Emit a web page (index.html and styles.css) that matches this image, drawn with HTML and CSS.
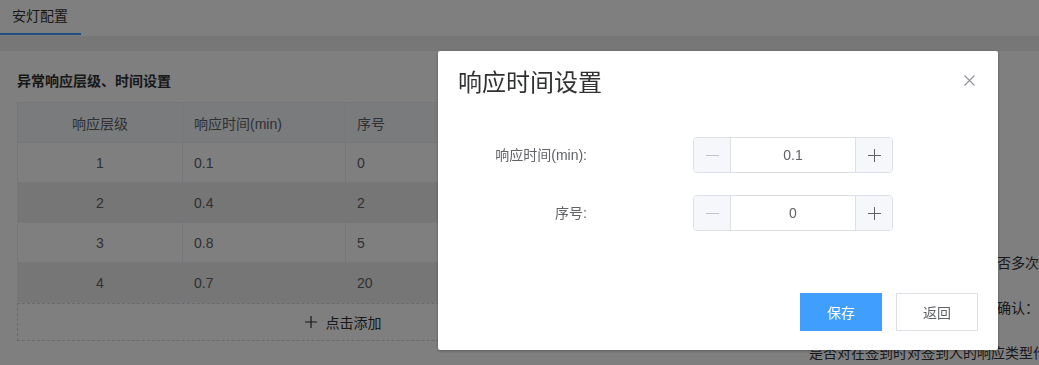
FILE: index.html
```html
<!DOCTYPE html>
<html lang="zh-CN">
<head>
  <meta charset="UTF-8" />
  <title>安灯配置</title>
  <link rel="stylesheet" href="styles.css">
</head>
<body>

  <!-- Tabs -->
  <div class="tabs">
    <div class="tab active">安灯配置</div>
  </div>

  <!-- Page content -->
  <div class="main">
    <div class="card">
      <div class="left-panel">
        <div class="section-title">异常响应层级、时间设置</div>
        <table class="level-table">
          <thead>
            <tr>
              <th class="center">响应层级</th>
              <th>响应时间(min)</th>
              <th>序号</th>
              <th class="center">操作</th>
            </tr>
          </thead>
          <tbody>
            <tr><td class="center">1</td><td>0.1</td><td>0</td><td class="center">编辑</td></tr>
            <tr class="striped"><td class="center">2</td><td>0.4</td><td>2</td><td class="center">编辑</td></tr>
            <tr><td class="center">3</td><td>0.8</td><td>5</td><td class="center">编辑</td></tr>
            <tr class="striped"><td class="center">4</td><td>0.7</td><td>20</td><td class="center">编辑</td></tr>
          </tbody>
        </table>
        <div class="add-row">
          <svg class="add-icon" width="12" height="12" viewBox="0 0 12 12"><path d="M6 0v12M0 6h12" stroke="#303133" stroke-width="1.2" fill="none"/></svg>
          <span>点击添加</span>
        </div>
      </div>

      <div class="right-panel">
        <div class="section-title">其他设置</div>
        <div class="opt-line">呼叫超时时间：</div>
        <div class="opt-line">响应超时提醒：</div>
        <div class="opt-line">升级通知方式：</div>
        <div class="opt-line indent">呼叫在超时后仍未被响应时是否多次发送提醒</div>
        <div class="opt-line indent">人员到达现场后是否需要签到确认：</div>
        <div class="opt-line">是否对在签到时对签到人的响应类型作校验</div>
      </div>
    </div>
  </div>

  <!-- Dialog -->
  <div class="mask"></div>
  <div class="dialog">
    <div class="dialog-header">
      <span class="dialog-title">响应时间设置</span>
      <svg class="dialog-close" width="11" height="11" viewBox="0 0 11 11"><path d="M0.5 0.5l10 10M10.5 0.5l-10 10" stroke="#909399" stroke-width="1.1" fill="none"/></svg>
    </div>
    <div class="dialog-body">
      <div class="form-item">
        <label class="form-label">响应时间(min):</label>
        <div class="input-number">
          <span class="num-btn minus"><svg width="13" height="13" viewBox="0 0 13 13"><path d="M0 6.5h13" stroke="#c0c4cc" stroke-width="1" fill="none"/></svg></span>
          <span class="num-value">0.1</span>
          <span class="num-btn plus"><svg width="13" height="13" viewBox="0 0 13 13"><path d="M6.5 0v13M0 6.5h13" stroke="#606266" stroke-width="1" fill="none"/></svg></span>
        </div>
      </div>
      <div class="form-item">
        <label class="form-label">序号:</label>
        <div class="input-number">
          <span class="num-btn minus"><svg width="13" height="13" viewBox="0 0 13 13"><path d="M0 6.5h13" stroke="#c0c4cc" stroke-width="1" fill="none"/></svg></span>
          <span class="num-value">0</span>
          <span class="num-btn plus"><svg width="13" height="13" viewBox="0 0 13 13"><path d="M6.5 0v13M0 6.5h13" stroke="#606266" stroke-width="1" fill="none"/></svg></span>
        </div>
      </div>
    </div>
    <div class="dialog-footer">
      <button class="btn btn-primary">保存</button>
      <button class="btn">返回</button>
    </div>
  </div>

</body>
</html>
```

FILE: styles.css
```css
html, body {
  margin: 0; padding: 0;
  height: 100%;
  font-family: "Liberation Sans", "Noto Sans CJK SC", sans-serif;
  font-size: 14px;
  color: #606266;
  background: #fff;
  overflow: hidden;
}
.tabs {
  height: 36px;
  background: #fff;
  display: flex;
  box-sizing: border-box;
}
.tab {
  height: 35px;
  line-height: 33px;
  padding: 0 13px 0 12px;
  box-sizing: border-box;
  color: #303133;
  border-bottom: 2px solid #409eff;
}
.main {
  background: #eeeff1;
  padding-top: 15px;
}
.card {
  background: #fff;
  padding: 20px 17px 0;
  height: 294px;
  overflow: hidden;
  display: flex;
}
.left-panel {
  width: 652px;
  flex-shrink: 0;
}
.section-title {
  font-size: 14px;
  font-weight: bold;
  color: #303133;
  line-height: 20px;
}
.left-panel .section-title {
  margin-bottom: 11px;
}
.level-table {
  width: 100%;
  border-collapse: collapse;
  table-layout: fixed;
}
.level-table th, .level-table td {
  height: 39px;
  padding: 0 11px;
  border: 1px solid #ebeef5;
  text-align: left;
  font-weight: normal;
  color: #606266;
}
.level-table th {
  background: #f5f7fa;
}
.level-table th:nth-child(1) { width: 142px; }
.level-table th:nth-child(2) { width: 140px; }
.level-table th:nth-child(3) { width: 140px; }
.level-table .center { text-align: center; }
.level-table tr.striped td { background: #ececec; }
.add-row {
  height: 36px;
  border: 1px dashed #d2d4d9;
  display: flex;
  align-items: center;
  justify-content: center;
  gap: 9px;
  color: #303133;
}
.right-panel {
  margin-left: 140px;
  flex-shrink: 0;
  white-space: nowrap;
  color: #333;
}
.right-panel .section-title {
  margin-bottom: 15px;
}
.opt-line {
  height: 45px;
  line-height: 45px;
}
.opt-line.indent {
  padding-left: 6px;
}

.mask {
  position: fixed;
  inset: 0;
  background: rgba(0, 0, 0, 0.5);
}
.dialog {
  position: fixed;
  left: 438px; top: 51px;
  width: 560px;
  background: #fff;
  border-radius: 2px;
  box-shadow: 0 1px 3px rgba(0, 0, 0, 0.3);
}
.dialog-header {
  position: relative;
  padding: 20px 20px 10px;
}
.dialog-title {
  display: block;
  font-size: 24px;
  line-height: 24px;
  color: #303133;
}
.dialog-close {
  position: absolute;
  top: 24px; right: 23px;
}
.dialog-body {
  padding: 32px 20px 30px;
}
.form-item {
  display: flex;
  align-items: center;
  margin-bottom: 22px;
}
.form-label {
  width: 141px;
  padding-right: 12px;
  box-sizing: border-box;
  text-align: right;
  line-height: 36px;
  color: #606266;
}
.input-number {
  margin-left: 94px;
  width: 200px;
  height: 36px;
  box-sizing: border-box;
  border: 1px solid #dcdfe6;
  border-radius: 4px;
  display: flex;
  overflow: hidden;
}
.num-btn {
  width: 36px;
  background: #f5f7fa;
  display: flex;
  align-items: center;
  justify-content: center;
}
.num-btn.minus { border-right: 1px solid #dcdfe6; }
.num-btn.plus { border-left: 1px solid #dcdfe6; }
.num-value {
  flex: 1;
  text-align: center;
  line-height: 34px;
  color: #606266;
}
.dialog-footer {
  padding: 10px 20px 19px;
  display: flex;
  justify-content: flex-end;
  gap: 14px;
}
.btn {
  width: 82px;
  height: 38px;
  border: 1px solid #dcdfe6;
  background: #fff;
  color: #606266;
  font-family: inherit;
  font-size: 14px;
  padding: 0;
}
.btn-primary {
  background: #409eff;
  border-color: #409eff;
  color: #fff;
}
```
